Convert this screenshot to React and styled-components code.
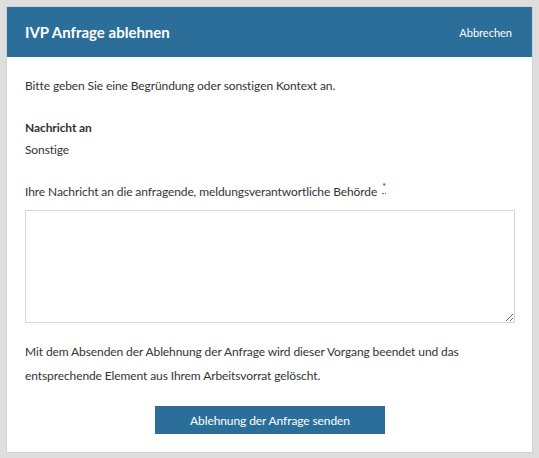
import React from "react";
import styled, { createGlobalStyle } from "styled-components";

const Global = createGlobalStyle`
  html, body { margin: 0; padding: 0; }
  body {
    background: #dedede;
    font-family: Lato, "Open Sans", sans-serif;
    color: #333;
  }
`;

const Page = styled.div`
  padding: 7px;
`;

const Modal = styled.div`
  width: 525px;
  height: 445px;
  background: #fff;
  box-shadow: 0 0 0 1px #d2d2d2;
  display: flex;
  flex-direction: column;
`;

const Header = styled.div`
  height: 50px;
  background: #2b6e9a;
  color: #fff;
  display: flex;
  align-items: center;
  justify-content: space-between;
  padding: 0 20px 0 18px;
  box-sizing: border-box;
`;

const Title = styled.h1`
  margin: 0;
  font-size: 15px;
  font-weight: 700;
`;

const Cancel = styled.button`
  background: none;
  border: 0;
  padding: 0;
  color: #fff;
  font-family: inherit;
  font-size: 11px;
  cursor: pointer;
`;

const Body = styled.div`
  padding: 18px 17px 18px 18px;
  display: flex;
  flex-direction: column;
  font-size: 12px;
  letter-spacing: -0.1px;
  line-height: 22px;
`;

const Text = styled.p`
  margin: ${(p) => p.$mt || 0}px 0 0;
  line-height: ${(p) => p.$lh || 22}px;
`;

const Strong = styled.p`
  margin: 20px 0 0;
  font-weight: 700;
`;

const Label = styled.label`
  margin-top: 20px;
`;

const Req = styled.span`
  display: inline-block;
  margin-left: 5px;
  font-size: 9px;
  line-height: 9px;
  vertical-align: 6px;
  border-bottom: 1px dotted #666;
  padding-bottom: 2px;
`;

const Area = styled.textarea`
  margin-top: 7px;
  height: 113px;
  box-sizing: border-box;
  border: 1px solid #d6d6d6;
  font-family: inherit;
  font-size: 13px;
  resize: both;
  outline: none;
`;

const Actions = styled.div`
  display: flex;
  justify-content: center;
  margin-top: 18px;
`;

const Primary = styled.button`
  width: 230px;
  height: 28px;
  background: #2b6e9a;
  color: #fff;
  border: 0;
  font-family: inherit;
  font-size: 12px;
  letter-spacing: -0.1px;
  cursor: pointer;
`;

export default function App() {
  return (
    <>
      <Global />
      <Page>
        <Modal>
          <Header>
            <Title>IVP Anfrage ablehnen</Title>
            <Cancel>Abbrechen</Cancel>
          </Header>
          <Body>
            <Text>Bitte geben Sie eine Begründung oder sonstigen Kontext an.</Text>
            <Strong>Nachricht an</Strong>
            <Text>Sonstige</Text>
            <Label>
              Ihre Nachricht an die anfragende, meldungsverantwortliche Behörde
              <Req>*</Req>
            </Label>
            <Area />
            <Text $mt={17} $lh={24}>
              Mit dem Absenden der Ablehnung der Anfrage wird dieser Vorgang beendet und das
              <br />
              entsprechende Element aus Ihrem Arbeitsvorrat gelöscht.
            </Text>
            <Actions>
              <Primary>Ablehnung der Anfrage senden</Primary>
            </Actions>
          </Body>
        </Modal>
      </Page>
    </>
  );
}
